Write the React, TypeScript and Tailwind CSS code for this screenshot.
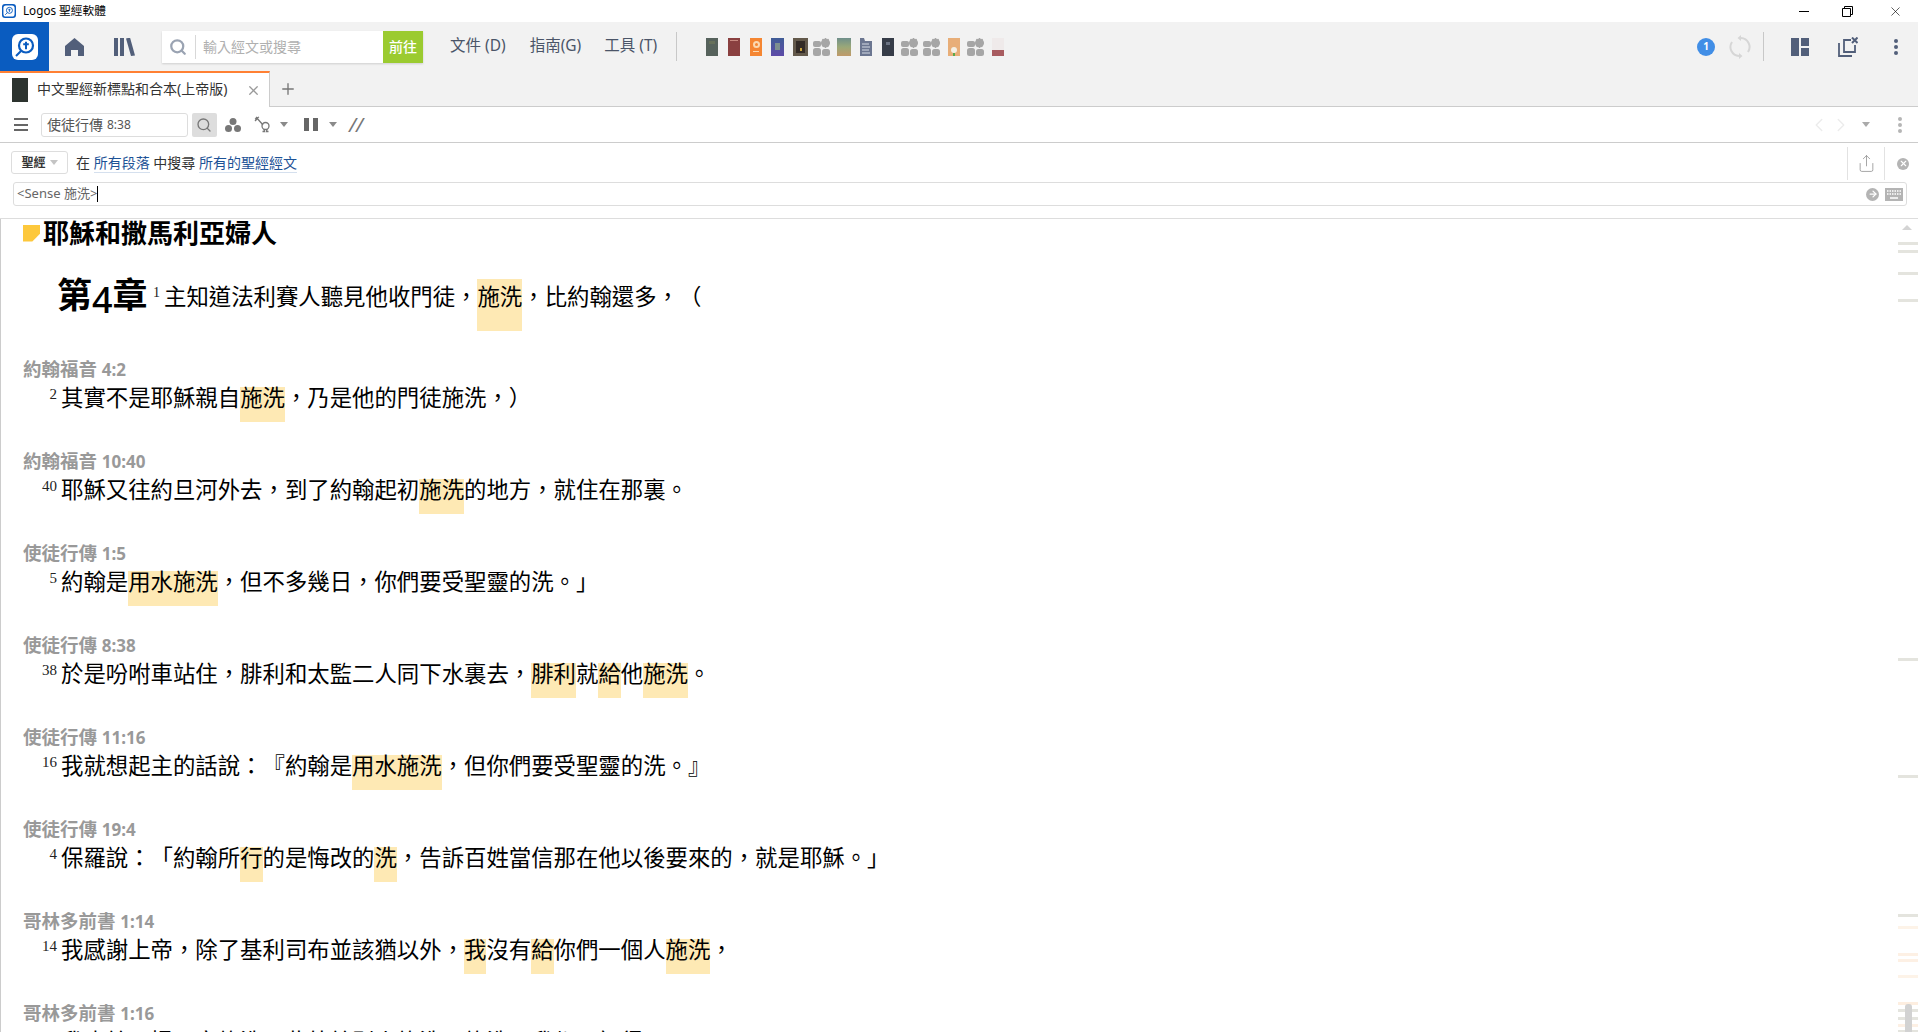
import { Search, Plus, X, ChevronLeft, ChevronRight, Share, ArrowRight } from "lucide-react"

const passages = [
    { ref: "約翰福音", num: "4:2", v: "2", text: "其實不是耶穌親自|施洗|，乃是他的門徒施洗，）" },
    { ref: "約翰福音", num: "10:40", v: "40", text: "耶穌又往約旦河外去，到了約翰起初|施洗|的地方，就住在那裏。" },
    { ref: "使徒行傳", num: "1:5", v: "5", text: "約翰是|用水施洗|，但不多幾日，你們要受聖靈的洗。」" },
    { ref: "使徒行傳", num: "8:38", v: "38", text: "於是吩咐車站住，腓利和太監二人同下水裏去，|腓利|就|給|他|施洗|。" },
    { ref: "使徒行傳", num: "11:16", v: "16", text: "我就想起主的話說：『約翰是|用水施洗|，但你們要受聖靈的洗。』" },
    { ref: "使徒行傳", num: "19:4", v: "4", text: "保羅說：「約翰所|行|的是悔改的|洗|，告訴百姓當信那在他以後要來的，就是耶穌。」" },
    { ref: "哥林多前書", num: "1:14", v: "14", text: "我感謝上帝，除了基利司布並該猶以外，|我|沒有|給|你們一個人|施洗|，" },
    { ref: "哥林多前書", num: "1:16", v: "16", text: "我也給司提反家施洗；此外給別人施洗不施洗，我都不記得。" },
]

const marks = [
    { top: 23, color: "#e4e4de" }, { top: 31, color: "#e4e4de" }, { top: 53, color: "#e4e4de" }, { top: 80, color: "#e4e4de" },
    { top: 439, color: "#e4e4de" }, { top: 556, color: "#e4e4de" }, { top: 695, color: "#e4e4de" }, { top: 707, color: "#fdf3e8" },
    { top: 734, color: "#fdf0e4" }, { top: 740, color: "#fdf0e4" }, { top: 756, color: "#fdf3e8" }, { top: 783, color: "#fdeee0" },
    { top: 790, color: "#e4e4de" }, { top: 798, color: "#e4e4de" }, { top: 805, color: "#fdf0e4" }, { top: 811, color: "#e4e4de" },
]

const LogoMark = ({ size }: { size: number }) => (
    <svg width={size} height={size} viewBox="0 0 28 28">
        <rect x="1" y="1" width="26" height="26" rx="6" fill="white" />
        <circle cx="15" cy="12.500" r="7" fill="none" stroke="#0a5cc0" strokeWidth="2.200" />
        <path d="M15 8.800v7.400M12.200 11.200h5.600M10 18l-5 5" fill="none" stroke="#0a5cc0" strokeWidth="2" />
    </svg>
)

const GroupIcon = ({ className }: { className: string }) => (
    <svg width="17" height="18" viewBox="0 0 17 18" fill="#a6a6a6" className={className}>
        <rect x="0" y="3" width="8" height="6" rx="2" />
        <rect x="0" y="10" width="8" height="8" rx="2.500" />
        <rect x="9" y="11" width="8" height="7" rx="2.500" />
        <circle cx="12.500" cy="5" r="4.500" />
        <path d="M12 0h1v10h-1zM7.500 4.500h10v1h-10zM9 1.500l.8-.8 6 7-.8.8zM16 1.500l-.8-.8-6 7 .8.8z" />
    </svg>
)

const BookShelf = () => (
    <div className="ml-[29px] flex items-center">
        <span className="w-[12px] h-[18px] bg-[#56625c] flex justify-center pt-[3px]">
            <span className="w-[6px] h-[3px] bg-[#66705a]"></span>
        </span>
        <span className="ml-[10px] w-[12px] h-[18px] bg-[#8a4040] px-[2px] pt-[2px]">
            <span className="block h-px bg-[#c98a80]"></span>
        </span>
        <span className="ml-[10px] w-[12px] h-[18px] bg-[#f58632] flex flex-col items-center pt-[3px] gap-[3px]">
            <span className="w-[7px] h-[7px] rounded-full border-2 border-[#fbd9b0]"></span>
            <span className="w-[6px] h-px bg-[#fbd9b0]"></span>
        </span>
        <span className="ml-[9px] w-[13px] h-[18px] bg-linear-to-b from-[#3f5c96] to-[#5d4aa8] flex justify-center pt-[5px]">
            <span className="w-[5px] h-[7px] bg-[#7d8f8f]"></span>
        </span>
        <span className="ml-[9px] w-[15px] h-[18px] bg-[#63594b] p-[3px]">
            <span className="block h-full bg-[#332b26] pt-[7px]">
                <span className="block mx-auto w-[2px] h-[3px] bg-[#c9a23c]"></span>
            </span>
        </span>
        <GroupIcon className="ml-[5px]" />
        <span className="ml-[7px] w-[14px] h-[18px] bg-linear-to-b from-[#6f8f8a] via-[#9aa878] to-[#c09a6a]"></span>
        <svg width="12" height="18" viewBox="0 0 12 18" className="ml-[9px]">
            <path d="M0 0h4l1 3h7v15H0z" fill="#6b7690" />
            <path d="M2 6h7M2 9h8M2 12h7M2 15h8" stroke="#d5dae4" />
        </svg>
        <span className="ml-[10px] w-[12px] h-[18px] bg-[#363c48] flex justify-center pt-[4px]">
            <span className="w-[4px] h-[3px] bg-[#6a7282]"></span>
        </span>
        <GroupIcon className="ml-[7px]" />
        <GroupIcon className="ml-[5px]" />
        <span className="ml-[8px] w-[12px] h-[18px] bg-[#e8ae78] flex flex-col items-center pt-[9px]">
            <span className="w-[6px] h-[6px] rounded-full bg-[#f4f0e4]"></span>
            <span className="w-[2px] h-[3px] bg-[#58a84a]"></span>
        </span>
        <GroupIcon className="ml-[7px]" />
        <span className="ml-[8px] w-[12px] h-[18px] bg-[#efeaea] flex flex-col justify-end">
            <span className="h-[6px] bg-[#a85c60]"></span>
        </span>
    </div>
)

const Caret = ({ color = "border-t-[#8a8a8a]" }: { color?: string }) => (
    <span className={`w-0 h-0 border-x-[4px] border-x-transparent border-t-[5px] ${color}`}></span>
)

const Kebab = ({ color }: { color: string }) => (
    <span className="flex flex-col gap-[2px] w-[4px]">
        <span className={`w-[4px] h-[4px] rounded-full ${color}`}></span>
        <span className={`w-[4px] h-[4px] rounded-full ${color}`}></span>
        <span className={`w-[4px] h-[4px] rounded-full ${color}`}></span>
    </span>
)

const Segments = ({ text, pad }: { text: string; pad?: boolean }) => (
    <>
        {text.split("|").map((part, i) => (
            <span
                key={i}
                className={`inline-block align-top ${pad ? "pt-[7px]" : ""} ${i % 2 === 1 ? `bg-[#fee9b4] ${pad ? "h-[52px]" : "h-[35px]"}` : ""}`}
            >
                {part}
            </span>
        ))}
    </>
)

const Passage = ({ item }: { item: (typeof passages)[number] }) => (
    <div className="mb-[26px]">
        <div className="h-[28px] pl-[22px] text-[18.5px] leading-[26px] font-bold text-[#999999] whitespace-nowrap">
            {item.ref} <span className="text-[17px]">{item.num}</span>
        </div>
        <div className="flex h-[35px] mt-[3px] text-[22.4px] leading-[22px] text-black whitespace-nowrap">
            <span className="w-[56px] mr-[4px] text-right text-[15px] leading-[14px] font-['Liberation_Serif',serif] text-[#222222]">{item.v}</span>
            <div>
                <Segments text={item.text} />
            </div>
        </div>
    </div>
)

const App = () => {
    return (
        <div className="h-screen w-full flex flex-col overflow-hidden bg-white [text-spacing-trim:space-all] font-['Noto_Sans','Noto_Sans_CJK_TC',sans-serif]">
            {/* window title */}
            <div className="h-[22px] flex items-center shrink-0">
                <div className="ml-[2px] w-[14px] h-[14px] rounded-[3px] bg-[#0a5cc0] flex items-center justify-center">
                    <LogoMark size={12} />
                </div>
                <span className="ml-[7px] text-[11.7px] text-black">Logos 聖經軟體</span>
                <div className="ml-auto flex items-center">
                    <span className="w-[10px] h-px bg-black mr-[33px]"></span>
                    <svg width="11" height="11" viewBox="0 0 11 11" fill="none" stroke="black" className="mr-[35px]">
                        <path d="M.5 2.500h8v8h-8zM2.500 2.500v-2h8v8h-2" />
                    </svg>
                    <X size={15} strokeWidth={1} className="text-black mr-[15px]" />
                </div>
            </div>

            {/* main nav */}
            <div className="h-[49px] flex items-center bg-[#f2f2f2] shrink-0">
                <div className="w-[49px] h-full bg-[#0a5cc0] flex items-center justify-center">
                    <LogoMark size={28} />
                </div>
                <svg width="19" height="18" viewBox="0 0 19 18" fill="#525f7a" className="ml-[16px]">
                    <path d="M9.500 0L19 8v10h-6v-6H6v6H0V8z" />
                </svg>
                <svg width="21" height="18" viewBox="0 0 21 18" fill="#525f7a" className="ml-[30px]">
                    <path d="M0 0h4v18H0zM6 0h4v18H6zM12 .5l4-1 5 18-4 .5z" />
                </svg>
                <div className="ml-[27px] w-[261px] h-[32px] flex items-center bg-white shadow-[0_1px_2px_rgba(0,0,0,0.15)]">
                    <Search size={18} strokeWidth={3} className="ml-[7px] text-[#9aa3b2]" />
                    <span className="ml-[8px] w-px h-[24px] bg-[#d8d8d8]"></span>
                    <span className="ml-[7px] -mt-px text-[14px] text-[#b0b0b0]">輸入經文或搜尋</span>
                    <span className="ml-auto w-[40px] h-full bg-[#9bcb30] text-white text-[14px] font-medium flex items-center justify-center">前往</span>
                </div>
                <span className="ml-[27px] -mt-px text-[15.500px] text-[#4b5568] whitespace-nowrap">文件 (D)</span>
                <span className="ml-[24px] -mt-px text-[15.500px] text-[#4b5568] whitespace-nowrap">指南(G)</span>
                <span className="ml-[23px] -mt-px text-[15.500px] text-[#4b5568] whitespace-nowrap">工具 (T)</span>
                <span className="ml-[19px] w-px h-[29px] bg-[#c8c8c8]"></span>
                <BookShelf />
                <div className="ml-auto flex items-center">
                    <span className="w-[18px] h-[18px] rounded-full bg-[#418ee6] text-white text-[10px] font-bold flex items-center justify-center">1</span>
                    <svg width="22" height="24" viewBox="0 0 22 24" fill="none" stroke="#d6d6d6" strokeWidth="2" className="ml-[14px]">
                        <path d="M12 3a9 9 0 0 1 7 14M10 21a9 9 0 0 1-7-14" />
                        <path d="M12 0v6l-3.500-3zM10 24v-6l3.500 3z" fill="#d6d6d6" stroke="none" />
                    </svg>
                    <span className="ml-[12px] w-px h-[29px] bg-[#c8c8c8]"></span>
                    <svg width="18" height="18" viewBox="0 0 18 18" fill="#525f7a" className="ml-[27px]">
                        <path d="M0 0h8v18H0zM10 0h8v8h-8zM10 10h8v8h-8z" />
                    </svg>
                    <svg width="20" height="20" viewBox="0 0 20 20" fill="none" stroke="#525f7a" strokeWidth="1.800" className="ml-[29px]">
                        <path d="M13 3H6v12h11V8M1 6v13h13" />
                        <path d="M14 .5l5.500 5.500M19.500 .5L14 6" strokeWidth="2" />
                    </svg>
                    <span className="ml-[36px] mr-[20px]">
                        <Kebab color="bg-[#525f7a]" />
                    </span>
                </div>
            </div>

            {/* tabs */}
            <div className="h-[36px] flex bg-[#f2f2f2] shrink-0">
                <div className="w-[270px] h-full flex items-center bg-white border-t-2 border-r border-t-[#ff8033] border-r-[#cccccc]">
                    <span className="ml-[12px] w-[16px] h-[24px] bg-[#2c332f]"></span>
                    <span className="ml-[9px] -mt-[3px] text-[14px] text-[#333333] whitespace-nowrap">中文聖經新標點和合本(上帝版)</span>
                    <X size={15} strokeWidth={2} className="ml-auto mr-[8px] text-[#9a9a9a]" />
                </div>
                <div className="flex-1 flex items-center border-b border-[#cccccc]">
                    <Plus size={18} strokeWidth={1.800} className="ml-[9px] text-[#777777]" />
                </div>
            </div>

            {/* resource toolbar */}
            <div className="h-[36px] flex items-center border-b border-[#cccccc] shrink-0">
                <span className="ml-[14px] w-[14px] flex flex-col gap-[3.500px]">
                    <span className="h-[2px] bg-[#666666]"></span>
                    <span className="h-[2px] bg-[#666666]"></span>
                    <span className="h-[2px] bg-[#666666]"></span>
                </span>
                <div className="ml-[13px] w-[147px] h-[24px] flex items-center pl-[5px] rounded-[3px] border border-[#dddddd] text-[14px] text-[#555555] whitespace-nowrap">
                    使徒行傳 <span className="ml-1 text-[12px]">8:38</span>
                </div>
                <span className="ml-[4px] w-[25px] h-[24px] rounded-[2px] bg-[#dddddd] flex items-center justify-center">
                    <Search size={16} strokeWidth={2} className="-ml-[2px] text-[#777777]" />
                </span>
                <svg width="16" height="14" viewBox="0 0 16 14" fill="#777777" className="ml-[8px]">
                    <circle cx="8" cy="3.500" r="3.500" />
                    <circle cx="3.500" cy="10.500" r="3.500" />
                    <circle cx="12.500" cy="10.500" r="3.500" />
                </svg>
                <svg width="17" height="17" viewBox="0 0 17 17" fill="none" stroke="#777777" strokeWidth="1.300" className="ml-[13px]">
                    <path d="M2 1l7 8M1 5l3-3M5 1L1 3" />
                    <circle cx="11.500" cy="10" r="3.500" />
                    <path d="M8.500 15.500h2l-.5-2.500M14.500 15.500h-2l.5-2.500" />
                </svg>
                <span className="ml-[9px] flex"><Caret /></span>
                <span className="ml-[16px] flex gap-[4px]">
                    <span className="w-[5px] h-[13px] bg-[#666666]"></span>
                    <span className="w-[5px] h-[13px] bg-[#666666]"></span>
                </span>
                <span className="ml-[11px] flex"><Caret /></span>
                <span className="ml-[12px] text-[20px] leading-none italic text-[#777777]">//</span>
                <div className="ml-auto flex items-center">
                    <ChevronLeft size={22} strokeWidth={1.500} className="-ml-[2px] text-[#ececec]" />
                    <ChevronRight size={22} strokeWidth={1.500} className="text-[#ececec]" />
                    <span className="ml-[10px] flex"><Caret color="border-t-[#aaaaaa]" /></span>
                    <span className="ml-[28px] mr-[16px]"><Kebab color="bg-[#b5b5b5]" /></span>
                </div>
            </div>

            {/* search panel */}
            <div className="h-[76px] flex flex-col border-b border-[#dddddd] shrink-0">
                <div className="h-[39px] flex items-center">
                    <div className="ml-[11px] w-[57px] h-[23px] flex items-center justify-center gap-[4px] rounded-[3px] border border-[#dddddd] text-[12px] font-bold text-[#333333]">
                        聖經 <Caret color="border-t-[#c4c4c4]" />
                    </div>
                    <span className="ml-[8px] text-[14px] text-[#333333] whitespace-nowrap">
                        在 <span className="text-[#1d5296] border-b border-[#d5e0ee]">所有段落</span> 中搜尋 <span className="text-[#1d5296] border-b border-[#d5e0ee]">所有的聖經經文</span>
                    </span>
                    <div className="ml-auto h-[33px] self-start mt-[4px] flex items-center">
                        <span className="w-[37px] h-full flex items-center justify-center border-l border-[#e2e2e2]">
                            <Share size={19} strokeWidth={1} className="text-[#8f8f8f]" />
                        </span>
                        <span className="w-[34px] h-full pl-[12px] flex items-center border-l border-[#e2e2e2]">
                            <span className="w-[12px] h-[12px] rounded-full bg-[#b4b4b4] flex items-center justify-center">
                                <X size={9} strokeWidth={3} className="text-white" />
                            </span>
                        </span>
                    </div>
                </div>
                <div className="ml-[13px] mr-[11px] h-[24px] flex items-center pl-[3px] rounded-[3px] border border-[#dddddd]">
                    <span className="text-[13px] text-[#666666] whitespace-nowrap">&lt;Sense 施洗&gt;</span>
                    <span className="w-px h-[16px] bg-black"></span>
                    <span className="ml-auto w-[13px] h-[13px] rounded-full bg-[#b4b4b4] flex items-center justify-center">
                        <ArrowRight size={10} strokeWidth={3} className="text-white" />
                    </span>
                    <svg width="18" height="13" viewBox="0 0 18 13" className="ml-[6px] mr-[3px]">
                        <rect width="18" height="13" fill="#b4b4b4" />
                        <path d="M2 3h14M2 6h14" stroke="white" strokeWidth="1.500" strokeDasharray="1.500 1" />
                        <path d="M5 10h8" stroke="white" strokeWidth="1.500" />
                    </svg>
                </div>
            </div>

            {/* reader */}
            <div className="relative flex-1 min-h-0 overflow-hidden border-l border-[#cccccc]">
                <div className="h-[28px] flex items-center whitespace-nowrap">
                    <span className="ml-[22px] w-[17px] h-[17px] bg-[#fdc83c] [clip-path:polygon(0_0,100%_0,100%_55%,55%_100%,0_100%)]"></span>
                    <span className="ml-[3px] text-[26px] leading-[28px] font-bold text-black">耶穌和撒馬利亞婦人</span>
                </div>
                <div className="flex h-[52px] mt-[32px] mb-[25px] text-[22.4px] leading-[22px] text-black whitespace-nowrap">
                    <span className="ml-[56px] -mt-[4px] w-[89px] text-[35px] leading-[40px] font-bold">
                        第<span className="text-[36px] font-medium align-[-5px]">4</span>章
                    </span>
                    <span className="ml-[7px] mr-[4px] pt-[7px] text-[14px] leading-[14px] font-['Liberation_Serif',serif] text-[#222222]">1</span>
                    <div>
                        <Segments pad text="主知道法利賽人聽見他收門徒，|施洗|，比約翰還多，（" />
                    </div>
                </div>
                {passages.map((p) => (
                    <Passage key={p.ref + p.num} item={p} />
                ))}

                {/* scrollbar and its hit marks */}
                <span className="absolute right-[6px] top-[6px] w-0 h-0 border-x-[5px] border-x-transparent border-b-[5px] border-b-[#d4d4d4]"></span>
                {marks.map((m) => (
                    <span key={m.top} className="absolute right-0 w-[20px] h-[3px]" style={{ top: m.top, backgroundColor: m.color }}></span>
                ))}
                <span className="absolute right-[6px] top-[785px] bottom-0 w-[7px] rounded-t-[3px] bg-[#d2d2d2]"></span>
            </div>
        </div>
    )
}

export default App
